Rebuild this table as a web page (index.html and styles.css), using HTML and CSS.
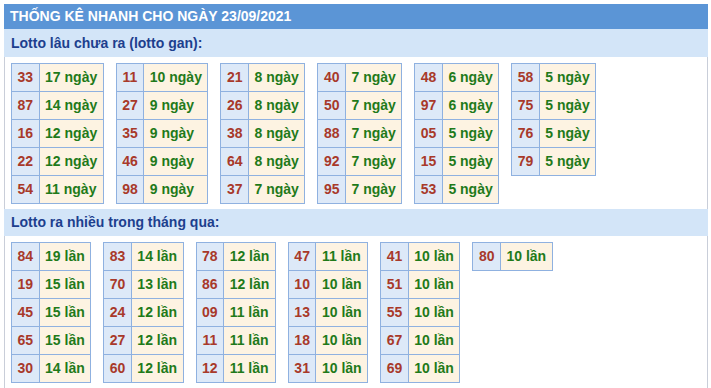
FILE: index.html
```html
<!DOCTYPE html>
<html lang="vi">
<head>
<meta charset="utf-8">
<title>Thống kê nhanh</title>
<link rel="stylesheet" href="styles.css">
</head>
<body>
<div class="box">
  <div class="title">THỐNG KÊ NHANH CHO NGÀY 23/09/2021</div>
  <div class="sub">Lotto lâu chưa ra (lotto gan):</div>
  <div class="area">
    <table class="t"><tr><td class="n">33</td><td class="v">17 ngày</td></tr><tr><td class="n">87</td><td class="v">14 ngày</td></tr><tr><td class="n">16</td><td class="v">12 ngày</td></tr><tr><td class="n">22</td><td class="v">12 ngày</td></tr><tr><td class="n">54</td><td class="v">11 ngày</td></tr></table>
    <table class="t"><tr><td class="n">11</td><td class="v">10 ngày</td></tr><tr><td class="n">27</td><td class="v">9 ngày</td></tr><tr><td class="n">35</td><td class="v">9 ngày</td></tr><tr><td class="n">46</td><td class="v">9 ngày</td></tr><tr><td class="n">98</td><td class="v">9 ngày</td></tr></table>
    <table class="t"><tr><td class="n">21</td><td class="v">8 ngày</td></tr><tr><td class="n">26</td><td class="v">8 ngày</td></tr><tr><td class="n">38</td><td class="v">8 ngày</td></tr><tr><td class="n">64</td><td class="v">8 ngày</td></tr><tr><td class="n">37</td><td class="v">7 ngày</td></tr></table>
    <table class="t"><tr><td class="n">40</td><td class="v">7 ngày</td></tr><tr><td class="n">50</td><td class="v">7 ngày</td></tr><tr><td class="n">88</td><td class="v">7 ngày</td></tr><tr><td class="n">92</td><td class="v">7 ngày</td></tr><tr><td class="n">95</td><td class="v">7 ngày</td></tr></table>
    <table class="t"><tr><td class="n">48</td><td class="v">6 ngày</td></tr><tr><td class="n">97</td><td class="v">6 ngày</td></tr><tr><td class="n">05</td><td class="v">5 ngày</td></tr><tr><td class="n">15</td><td class="v">5 ngày</td></tr><tr><td class="n">53</td><td class="v">5 ngày</td></tr></table>
    <table class="t"><tr><td class="n">58</td><td class="v">5 ngày</td></tr><tr><td class="n">75</td><td class="v">5 ngày</td></tr><tr><td class="n">76</td><td class="v">5 ngày</td></tr><tr><td class="n">79</td><td class="v">5 ngày</td></tr></table>
  </div>
  <div class="sub compact">Lotto ra nhiều trong tháng qua:</div>
  <div class="area">
    <table class="t"><tr><td class="n">84</td><td class="v">19 lần</td></tr><tr><td class="n">19</td><td class="v">15 lần</td></tr><tr><td class="n">45</td><td class="v">15 lần</td></tr><tr><td class="n">65</td><td class="v">15 lần</td></tr><tr><td class="n">30</td><td class="v">14 lần</td></tr></table>
    <table class="t"><tr><td class="n">83</td><td class="v">14 lần</td></tr><tr><td class="n">70</td><td class="v">13 lần</td></tr><tr><td class="n">24</td><td class="v">12 lần</td></tr><tr><td class="n">27</td><td class="v">12 lần</td></tr><tr><td class="n">60</td><td class="v">12 lần</td></tr></table>
    <table class="t"><tr><td class="n">78</td><td class="v">12 lần</td></tr><tr><td class="n">86</td><td class="v">12 lần</td></tr><tr><td class="n">09</td><td class="v">11 lần</td></tr><tr><td class="n">11</td><td class="v">11 lần</td></tr><tr><td class="n">12</td><td class="v">11 lần</td></tr></table>
    <table class="t"><tr><td class="n">47</td><td class="v">11 lần</td></tr><tr><td class="n">10</td><td class="v">10 lần</td></tr><tr><td class="n">13</td><td class="v">10 lần</td></tr><tr><td class="n">18</td><td class="v">10 lần</td></tr><tr><td class="n">31</td><td class="v">10 lần</td></tr></table>
    <table class="t"><tr><td class="n">41</td><td class="v">10 lần</td></tr><tr><td class="n">51</td><td class="v">10 lần</td></tr><tr><td class="n">55</td><td class="v">10 lần</td></tr><tr><td class="n">67</td><td class="v">10 lần</td></tr><tr><td class="n">69</td><td class="v">10 lần</td></tr></table>
    <table class="t"><tr><td class="n">80</td><td class="v">10 lần</td></tr></table>
  </div>
</div>
</body>
</html>
```

FILE: styles.css
```css
html, body {
  background: #ffffff;
}
body {
  margin: 4px 3px 0 4px;
  font-family: "Liberation Sans", Arial, sans-serif;
  font-size: 14px;
  font-weight: bold;
}
.box {
  width: 704px;
}
.title {
  height: 25px;
  line-height: 25px;
  background: #5b95d6;
  color: #ffffff;
  padding-left: 6px;
}
.sub {
  height: 28px;
  line-height: 28px;
  background: #d3e5f8;
  color: #1d3f8e;
  padding-left: 7px;
}
.sub.compact {
  height: 27px;
  line-height: 27px;
}
.area {
  border-left: 1px solid #c9ced9;
  border-right: 1px solid #c9ced9;
  padding: 6px 6px 5px 6px;
  display: flex;
  align-items: flex-start;
  gap: 12px;
}
.t {
  border-collapse: collapse;
}
.t td {
  border: 1px solid #8fb1e0;
  padding: 6px 5.5px;
  line-height: 15px;
  white-space: nowrap;
}
.t td.n {
  background: #dde9f8;
  color: #a8392a;
  text-align: center;
}
.t td.v {
  background: #fdf3e2;
  color: #1f7a1a;
}
```
